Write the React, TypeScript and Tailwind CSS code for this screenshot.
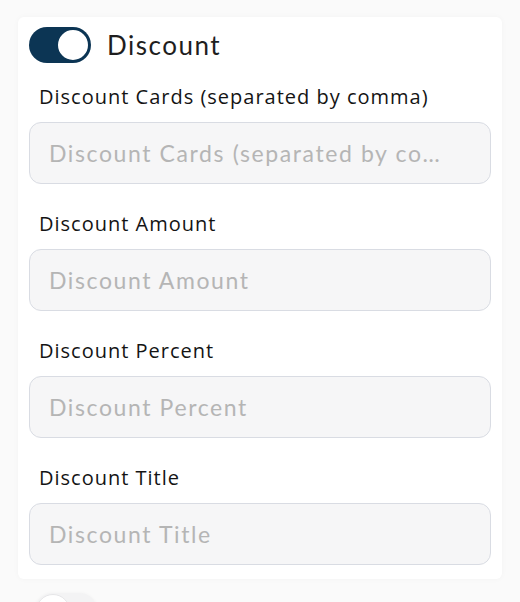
import React from "react";

const fields = [
  { label: "Discount Cards (separated by comma)", placeholder: "Discount Cards (separated by comma)" },
  { label: "Discount Amount", placeholder: "Discount Amount" },
  { label: "Discount Percent", placeholder: "Discount Percent" },
  { label: "Discount Title", placeholder: "Discount Title" },
];

function Toggle({ on }: { on: boolean }) {
  return (
    <div
      className={
        on
          ? "flex h-[36px] w-[62px] items-center justify-end rounded-full bg-[#0c3554] p-[1px]"
          : "flex h-[36px] w-[62px] items-center justify-start rounded-full bg-[#f3f3f4] p-[1px] shadow-[0_1px_4px_rgba(0,0,0,0.06)]"
      }
    >
      <span
        className={
          on
            ? "h-[34px] w-[34px] rounded-full border-[2px] border-[#0c3554] bg-white"
            : "h-[34px] w-[34px] rounded-full border border-[#e6e6e8] bg-white"
        }
      />
    </div>
  );
}

export default function App() {
  return (
    <div className="min-h-[602px] overflow-hidden bg-[#fafafa] pt-[17px] pl-[18px] pr-[18px] font-['Open_Sans',sans-serif]">
      <div className="rounded-[6px] bg-white px-[11px] pt-[10px] pb-[14px] shadow-[0_0_6px_rgba(0,0,0,0.03)]">
        <div className="flex items-center gap-[16px]">
          <Toggle on />
          <span className="font-['Lato',sans-serif] text-[26px] leading-none tracking-[1.5px] text-[#1e1e1e]">
            Discount
          </span>
        </div>
        <div className="mt-[21px] flex flex-col gap-[27px]">
          {fields.map((f) => (
            <div key={f.label} className="flex flex-col gap-[12px]">
              <label className="pl-[10px] text-[20px] leading-[26px] font-medium tracking-[1px] text-[#141414]">
                {f.label}
              </label>
              <input
                placeholder={f.placeholder}
                className="h-[62px] w-full truncate rounded-[12px] border border-[#d9dce3] bg-[#f6f6f7] pl-[19px] pr-[40px] font-['Lato',sans-serif] text-[23px] tracking-[1.6px] text-[#333] outline-none placeholder:text-[#b5b5b5]"
              />
            </div>
          ))}
        </div>
      </div>
      <div className="mt-[14px] pl-[17px]">
        <Toggle on={false} />
      </div>
    </div>
  );
}
